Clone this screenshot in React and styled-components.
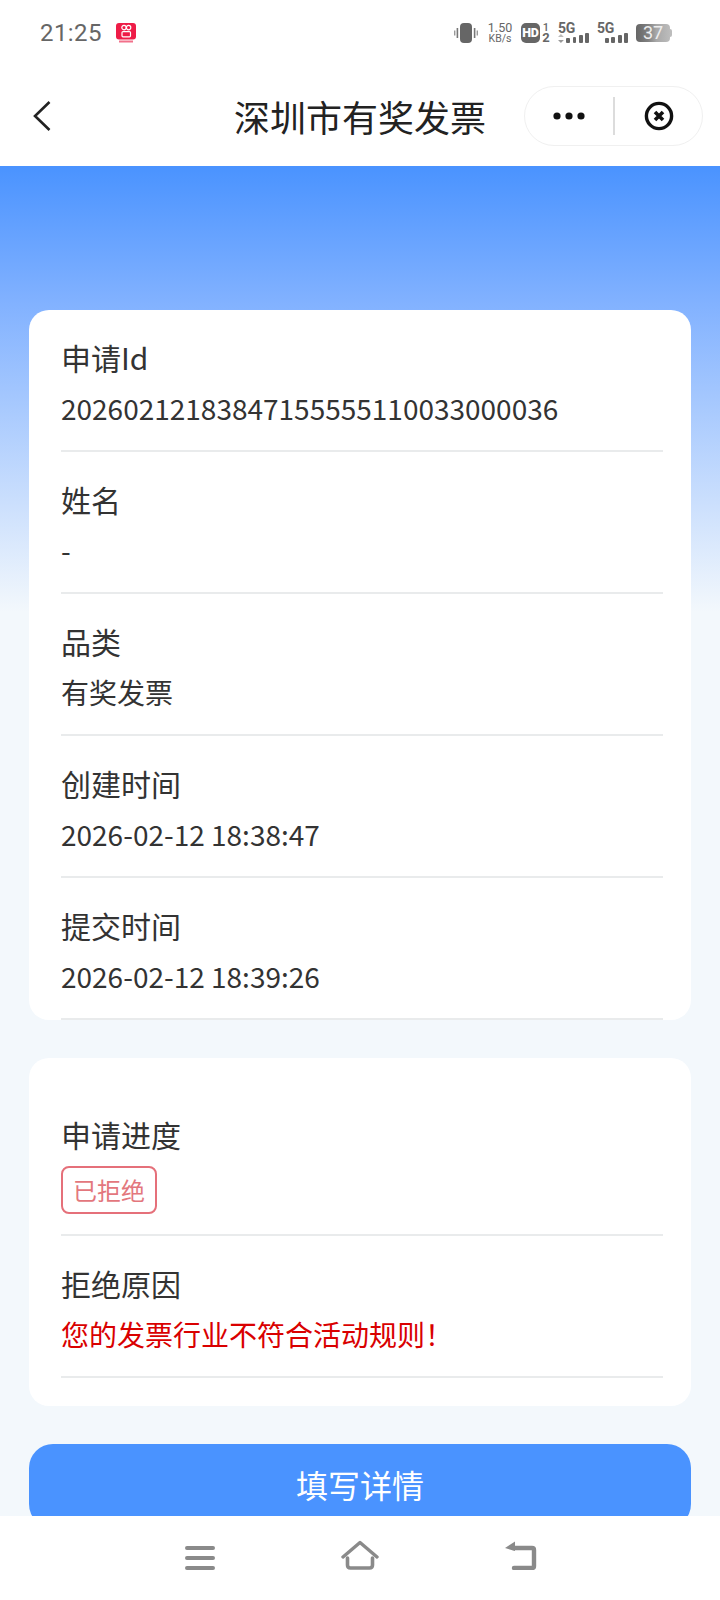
import React from 'react';
import styled, { createGlobalStyle } from 'styled-components';

const rows = [
  { label: '申请Id', value: '20260212183847155555110033000036' },
  { label: '姓名', value: '-' },
  { label: '品类', value: '有奖发票' },
  { label: '创建时间', value: '2026-02-12 18:38:47' },
  { label: '提交时间', value: '2026-02-12 18:39:26' },
];

function App() {
  return (
    <Page>
      <GlobalStyle />
      <StatusBar>
        <StatusLeft>
          <Time>21:25</Time>
          <AppIcon viewBox="0 0 20 20">
            <rect x="0" y="0" width="20" height="16.5" rx="3" fill="#ee1c47" />
            <circle cx="8" cy="4.6" r="2.2" fill="none" stroke="#fff" strokeWidth="1.2" />
            <circle cx="12.6" cy="4.6" r="2.2" fill="none" stroke="#fff" strokeWidth="1.2" />
            <rect x="6" y="8.6" width="8.5" height="5.2" rx="1" fill="none" stroke="#fff" strokeWidth="1.2" />
            <rect x="3" y="17.5" width="14" height="2" fill="#f2708a" />
          </AppIcon>
        </StatusLeft>
        <StatusRight>
          <Vibrate width="24" height="20" viewBox="0 0 24 20">
            <rect x="6" y="0" width="12" height="20" rx="4" fill="#666" />
            <rect x="2.6" y="5" width="1.6" height="10" fill="#777" />
            <rect x="0" y="7.5" width="1.4" height="5" fill="#999" />
            <rect x="19.8" y="5" width="1.6" height="10" fill="#777" />
            <rect x="22.6" y="7.5" width="1.4" height="5" fill="#999" />
          </Vibrate>
          <Speed>
            <SpeedValue>1.50</SpeedValue>
            <SpeedUnit>KB/s</SpeedUnit>
          </Speed>
          <HdGroup>
            <HdBadge>HD</HdBadge>
            <SimSlots>
              <SimOne>1</SimOne>
              <SimTwo>2</SimTwo>
            </SimSlots>
          </HdGroup>
          <Signal data />
          <Signal />
          <Battery>
            <BatteryBody>37</BatteryBody>
            <BatteryCap />
          </Battery>
        </StatusRight>
      </StatusBar>

      <NavBar>
        <BackIcon width="18" height="30" viewBox="0 0 18 30">
          <path d="M16.5 1 L2 15 L16.5 29" fill="none" stroke="#222" strokeWidth="2.6" />
        </BackIcon>
        <Title>深圳市有奖发票</Title>
        <Capsule>
          <MoreButton>
            <svg width="32" height="8" viewBox="0 0 32 8">
              <circle cx="4" cy="4" r="3.6" fill="#111" />
              <circle cx="16" cy="4" r="3.6" fill="#111" />
              <circle cx="28" cy="4" r="3.6" fill="#111" />
            </svg>
          </MoreButton>
          <CapsuleDivider />
          <CloseButton>
            <svg width="30" height="30" viewBox="0 0 30 30">
              <circle cx="15" cy="15" r="12.6" fill="none" stroke="#111" strokeWidth="3.4" />
              <path d="M11 11 L19 19 M19 11 L11 19" stroke="#111" strokeWidth="3.6" />
            </svg>
          </CloseButton>
        </Capsule>
      </NavBar>

      <Content>
        <Card>
          {rows.map((row) => (
            <Row key={row.label}>
              <Label>{row.label}</Label>
              <Value>{row.value}</Value>
            </Row>
          ))}
        </Card>

        <ProgressCard>
          <Row>
            <Label>申请进度</Label>
            <Tag>已拒绝</Tag>
          </Row>
          <Row>
            <Label>拒绝原因</Label>
            <Value $danger>您的发票行业不符合活动规则！</Value>
          </Row>
        </ProgressCard>

        <SubmitButton>填写详情</SubmitButton>
      </Content>

      <BottomBar>
        <svg width="30" height="30" viewBox="0 0 30 30">
          <path d="M2 8 H28 M2 18 H28 M2 28 H28" stroke="#8a8a8a" strokeWidth="4" strokeLinecap="round" />
        </svg>
        <svg width="38" height="30" viewBox="0 0 38 30">
          <path d="M2 17 L19 2.5 L36 17" fill="none" stroke="#8a8a8a" strokeWidth="3.4" strokeLinecap="round" strokeLinejoin="round" />
          <path d="M6.5 18 V25 Q6.5 28 9.5 28 H28.5 Q31.5 28 31.5 25 V18" fill="none" stroke="#8a8a8a" strokeWidth="3.6" strokeLinecap="round" />
        </svg>
        <svg width="34" height="30" viewBox="0 0 34 30">
          <path d="M1 8 L11 1.5 V11 Z" fill="#8a8a8a" />
          <path d="M9 8 H28 Q30 8 30 10 V26 Q30 28 28 28 H10" fill="none" stroke="#8a8a8a" strokeWidth="4.4" strokeLinecap="round" />
        </svg>
      </BottomBar>
    </Page>
  );
}

const GlobalStyle = createGlobalStyle`
  html, body {
    margin: 0;
    padding: 0;
    background: #f3f8fc;
  }
  * {
    box-sizing: border-box;
  }
`;

const Page = styled.div`
  width: 720px;
  height: 1600px;
  display: flex;
  flex-direction: column;
  overflow: hidden;
  font-family: "Noto Sans CJK SC", "Noto Sans", sans-serif;
  color: #333;
`;

const StatusBar = styled.div`
  height: 66px;
  flex: none;
  background: #fff;
  display: flex;
  align-items: center;
  justify-content: space-between;
  padding: 0 48px 0 40px;
`;

const StatusLeft = styled.div`
  display: flex;
  align-items: center;
  gap: 14px;
`;

const Time = styled.span`
  font-family: Roboto, sans-serif;
  font-size: 24px;
  letter-spacing: 0.4px;
  color: #666;
`;

const AppIcon = styled.svg`
  width: 20px;
  height: 20px;
`;

const StatusRight = styled.div`
  display: flex;
  align-items: center;
  gap: 8px;
`;

const Vibrate = styled.svg`
  margin-right: 2px;
`;

const Speed = styled.div`
  display: flex;
  flex-direction: column;
  align-items: center;
  width: 24px;
  margin-right: 1px;
  font-family: Roboto, sans-serif;
  color: #666;
`;

const SpeedValue = styled.span`
  font-size: 12.5px;
  line-height: 11px;
`;

const SpeedUnit = styled.span`
  font-size: 10.5px;
  line-height: 11px;
`;

const HdGroup = styled.div`
  display: flex;
  align-items: center;
  gap: 2px;
`;

const HdBadge = styled.span`
  width: 19px;
  height: 20px;
  border-radius: 5px;
  background: #666;
  color: #fff;
  font-family: Roboto, sans-serif;
  font-size: 12.5px;
  font-weight: 900;
  letter-spacing: -0.3px;
  line-height: 20px;
  text-align: center;
`;

const SimSlots = styled.div`
  display: flex;
  flex-direction: column;
  align-items: center;
  width: 8px;
  font-family: Roboto, sans-serif;
  color: #666;
  line-height: 10px;
`;

const SimOne = styled.span`
  font-size: 11px;
  font-weight: 500;
`;

const SimTwo = styled.span`
  font-size: 13px;
  font-weight: 700;
`;

const SignalWrap = styled.div`
  width: 31px;
  height: 20px;
  display: flex;
  flex-direction: column;
`;

const SignalText = styled.span`
  height: 10px;
  font-family: Roboto, sans-serif;
  font-size: 14px;
  font-weight: 700;
  letter-spacing: -0.3px;
  line-height: 10px;
  color: #666;
`;

const SignalBars = styled.div`
  height: 10px;
  display: flex;
  align-items: flex-end;
  justify-content: flex-end;
  gap: 2.4px;
`;

const DataArrows = styled.svg`
  margin-right: auto;
`;

const SignalBar = styled.i`
  display: block;
  width: 4px;
  height: ${(p) => p.$h}px;
  border-radius: 1px;
  background: #666;
`;

const Signal = ({ data }) => (
  <SignalWrap>
    <SignalText>5G</SignalText>
    <SignalBars>
      {data && (
        <DataArrows width="6" height="9" viewBox="0 0 6 9">
          <path d="M3 0 L6 3 H0 Z" fill="#bbb" />
          <path d="M3 9 L6 6 H0 Z" fill="#999" />
        </DataArrows>
      )}
      {[5, 6, 8, 10].map((h, i) => (
        <SignalBar key={i} $h={h} />
      ))}
    </SignalBars>
  </SignalWrap>
);

const Battery = styled.div`
  display: flex;
  align-items: center;
`;

const BatteryBody = styled.span`
  width: 34px;
  height: 18px;
  border-radius: 4px;
  background: linear-gradient(90deg, #666 0, #808080 35%, #a8a8a8 60%, #bcbcbc 100%);
  color: #eee;
  font-family: Roboto, sans-serif;
  font-size: 18px;
  line-height: 18px;
  text-align: center;
`;

const BatteryCap = styled.span`
  width: 2px;
  height: 8px;
  border-radius: 0 2px 2px 0;
  background: #bcbcbc;
`;

const NavBar = styled.div`
  height: 100px;
  flex: none;
  background: #fff;
  display: grid;
  grid-template-columns: 1fr auto 1fr;
  align-items: center;
  padding: 0 17px;
`;

const BackIcon = styled.svg`
  display: block;
  margin-left: 16px;
`;

const Title = styled.div`
  font-size: 36px;
  line-height: 50px;
  color: #222;
  white-space: nowrap;
`;

const Capsule = styled.div`
  justify-self: end;
  width: 179px;
  height: 60px;
  border: 1px solid #f0f0f0;
  border-radius: 30px;
  display: flex;
  align-items: center;
`;

const MoreButton = styled.div`
  width: 88px;
  display: flex;
  justify-content: center;
`;

const CapsuleDivider = styled.div`
  width: 2px;
  height: 38px;
  background: #dcdcdc;
`;

const CloseButton = styled.div`
  flex: 1;
  display: flex;
  justify-content: center;
`;

const Content = styled.div`
  flex: 1;
  min-height: 0;
  overflow: hidden;
  padding: 144px 29px 0;
  background: linear-gradient(180deg, #4a93ff 0, #7fb0ff 130px, #f3f8fc 446px);
`;

const Card = styled.div`
  height: 710px;
  overflow: hidden;
  background: #fff;
  border-radius: 20px;
  padding: 0 28px 0 32px;
`;

const ProgressCard = styled(Card)`
  height: auto;
  margin-top: 38px;
  padding-top: 29px;
  padding-bottom: 28px;
`;

const Row = styled.div`
  padding: 28px 0 22px;
  border-bottom: 2px solid #e9ebec;
`;

const Label = styled.div`
  font-size: 30px;
  line-height: 38px;
  color: #333;
`;

const Value = styled.div`
  margin-top: 12px;
  font-size: 28px;
  line-height: 40px;
  color: ${(p) => (p.$danger ? '#d90000' : '#333')};
`;

const Tag = styled.div`
  width: 96px;
  height: 48px;
  margin: 13px 0 -2px;
  border: 2px solid #e5707a;
  border-radius: 8px;
  color: #e3777d;
  font-size: 24px;
  line-height: 44px;
  text-align: center;
`;

const SubmitButton = styled.div`
  height: 84px;
  margin-top: 38px;
  border-radius: 24px;
  background: #4a93ff;
  color: #fff;
  font-size: 32px;
  line-height: 80px;
  text-align: center;
`;

const BottomBar = styled.div`
  height: 84px;
  flex: none;
  background: #fff;
  display: flex;
  align-items: center;
  padding: 0 182px 6px 185px;
  justify-content: space-between;
`;

export default App;
